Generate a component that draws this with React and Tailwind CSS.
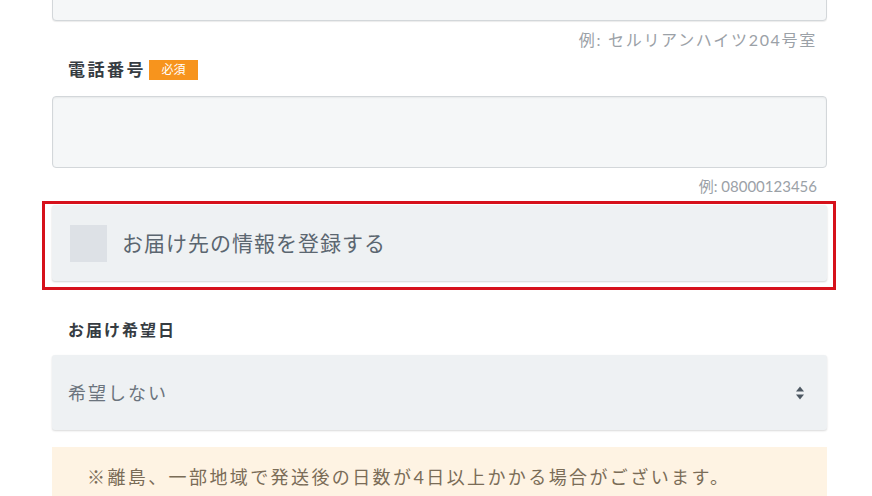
import { useState } from 'react'

const Hint = ({ children, className }) => (
  <div className={`flex h-[20px] items-center justify-end pr-[10px] text-[15px] leading-[20px] text-[#9ba1a7] ${className}`}>
    {children}
  </div>
)

const Arrows = () => (
  <svg width="10" height="16" viewBox="0 0 10 16" className="text-[#4d5862]">
    <path d="M5 1.5 L9 6.5 H1 Z" fill="currentColor" />
    <path d="M5 14.5 L9 9.5 H1 Z" fill="currentColor" />
  </svg>
)

const App = () => {
  const [checked, setChecked] = useState(false)

  return (
    <div className="h-[496px] w-[872px] overflow-hidden bg-white font-[Lato,'Noto_Sans_CJK_JP',sans-serif]">
      <div className="ml-[52px] flex w-[775px] flex-col">
        {/* address line 2 (cut off at top) */}
        <div className="mt-[-50px] h-[71px] rounded-[4px] border border-[#d3d7da] bg-[#f5f7f8] shadow-[0_1px_1px_rgba(0,0,0,0.08)]" />
        <Hint className="mt-[9px] text-[16px] tracking-[1.7px]">例: セルリアンハイツ204号室</Hint>

        {/* phone */}
        <div className="mt-[10px] flex h-[20px] items-center pl-[16px]">
          <span className="text-[17px] font-bold leading-[20px] tracking-[2.5px] text-[#363c42]">電話番号</span>
          <span className="ml-[3px] flex h-[20px] w-[49px] items-center justify-center bg-[#f7941d] text-[12px] leading-none text-white">
            必須
          </span>
        </div>
        <div className="mt-[16px] h-[72px] rounded-[4px] border border-[#d3d7da] bg-[#f5f7f8] shadow-[inset_0_1px_2px_rgba(0,0,0,0.06)]" />
        <Hint className="mt-[8px]">例: 08000123456</Hint>

        {/* save address checkbox, outlined in red */}
        <div className="mt-[5px] ml-[-10px] mr-[-9px] border-[3px] border-[#d6111b] pt-[1px] pr-[6px] pb-[6px] pl-[7px]">
          <label
            onClick={() => setChecked(!checked)}
            className="flex h-[76px] cursor-pointer items-center rounded-[3px] bg-[#eef1f3] pl-[18px] shadow-[0_1px_2px_rgba(0,0,0,0.18)]"
          >
            <span className="flex h-[37px] w-[37px] items-center justify-center bg-[#dde1e6]">
              {checked && <span className="h-[14px] w-[14px] bg-[#5b6670]" />}
            </span>
            <span className="ml-[15px] text-[21px] leading-[26px] tracking-[1px] text-[#5b6670]">お届け先の情報を登録する</span>
          </label>
        </div>

        {/* delivery date */}
        <div className="mt-[30px] h-[20px] pl-[16px] text-[16px] font-bold leading-[20px] tracking-[2px] text-[#363c42]">
          お届け希望日
        </div>
        <div className="mt-[15px] flex h-[75px] items-center justify-between rounded-[3px] bg-[#eef1f3] pl-[16px] pr-[22px] shadow-[0_1px_2px_rgba(0,0,0,0.15)]">
          <span className="text-[18px] leading-[24px] tracking-[2px] text-[#6b747d]">希望しない</span>
          <Arrows />
        </div>

        {/* notice */}
        <div className="mt-[17px] h-[80px] bg-[#fef3e3] pt-[18px] pl-[35px]">
          <p className="text-[18px] leading-[24px] tracking-[2.4px] text-[#7a6c57]">
            ※離島、一部地域で発送後の日数が4日以上かかる場合がございます。
          </p>
        </div>
      </div>
    </div>
  )
}

export default App
